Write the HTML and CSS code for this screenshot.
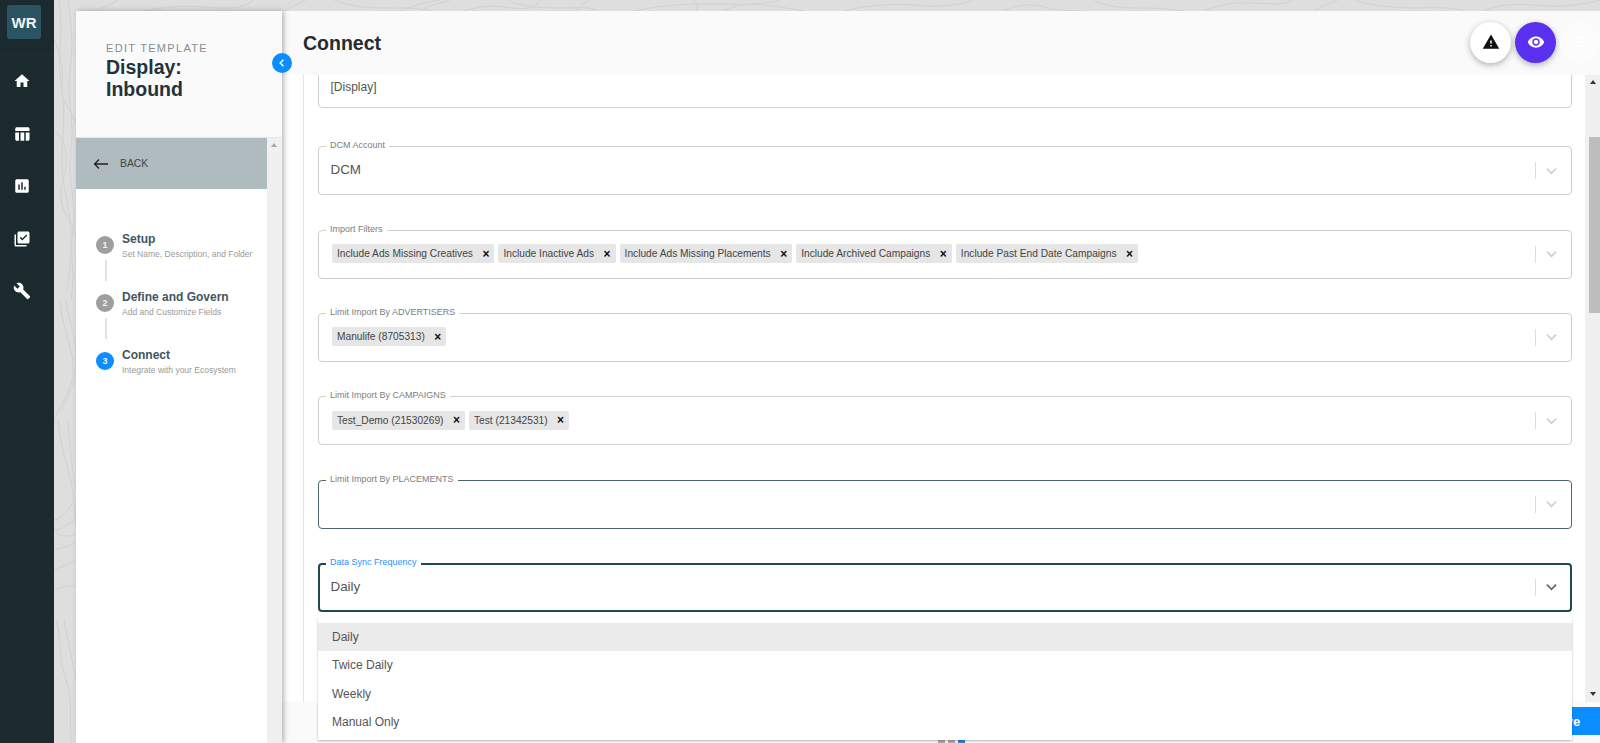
FILE: index.html
```html
<!DOCTYPE html>
<html lang="en">
<head>
<meta charset="utf-8">
<title>Edit Template</title>
<link rel="stylesheet" href="styles.css">
</head>
<body>
<div class="app">
  <nav class="rail">
    <div class="rail-top"><div class="logo">WR</div></div>
    <a class="rail-item"><svg class="icon18" viewBox="0 0 24 24"><path d="M10 20v-6h4v6h5v-8h3L12 3 2 12h3v8z"/></svg></a>
    <a class="rail-item"><svg class="icon18" viewBox="0 0 24 24"><path d="M10 10.02h5V21h-5zM17 21h3c1.1 0 2-.9 2-2v-9h-5v11zm3-18H5c-1.1 0-2 .9-2 2v3h19V5c0-1.1-.9-2-2-2zM3 19c0 1.1.9 2 2 2h3V10H3v9z"/></svg></a>
    <a class="rail-item"><svg class="icon18" viewBox="0 0 24 24"><path d="M19 3H5c-1.1 0-2 .9-2 2v14c0 1.1.9 2 2 2h14c1.1 0 2-.9 2-2V5c0-1.1-.9-2-2-2zM9 17H7v-7h2v7zm4 0h-2V7h2v10zm4 0h-2v-4h2v4z"/></svg></a>
    <a class="rail-item"><svg class="icon18" viewBox="0 0 24 24"><path d="M4 6H2v14c0 1.1.9 2 2 2h14v-2H4V6zm16-4H8c-1.1 0-2 .9-2 2v12c0 1.1.9 2 2 2h12c1.1 0 2-.9 2-2V4c0-1.1-.9-2-2-2zm-7.53 12L9 10.5l1.4-1.41 2.07 2.08L17.6 6 19 7.41 12.47 14z"/></svg></a>
    <a class="rail-item"><svg class="icon18" viewBox="0 0 24 24"><path d="M22.7 19l-9.1-9.1c.9-2.3.4-5-1.5-6.9-2-2-5-2.4-7.4-1.3L9 6 6 9 1.6 4.7C.4 7.1.9 10.1 2.9 12.1c1.9 1.9 4.6 2.4 6.9 1.5l9.1 9.1c.4.4 1 .4 1.4 0l2.3-2.3c.5-.4.5-1.1.1-1.4z"/></svg></a>
  </nav>

  <div class="stage">
    <svg class="topo" viewBox="0 0 1546 743" preserveAspectRatio="none" aria-hidden="true">
      <path d="M5 0c5 30-3 60 3 90s-5 60 3 100 8 60 2 100"/>
      <path d="M14 0c3 24 6 44 2 70s5 50 1 80 6 50 2 80 3 40-2 70"/>
      <path d="M0 40c6 14 10 26 8 44s8 22 14 40"/>
      <path d="M0 130c8 6 14 20 12 36s-8 22-4 38 12 20 14 34"/>
      <path d="M6 300c2 24 8 36 12 56s-2 34-10 48-8 14-8 20"/>
      <path d="M12 300c2 20 10 32 10 60s-8 34-14 50"/>
      <path d="M4 420c3 30 10 46 14 66s2 30 4 40"/>
      <path d="M14 420c2 26 4 50 8 70"/>
      <path d="M0 520c8-2 14-10 22-22"/>
      <path d="M0 530c8 0 16-6 22-12"/>
      <path d="M0 530c6 6 12 8 22 4"/>
      <path d="M0 550c8-2 16-4 22-8"/>
      <path d="M0 570c8-4 14-6 22-10"/>
      <path d="M0 590c10-4 14-4 22-4"/>
      <path d="M2 620c6 20 2 40 10 60s2 40 6 63"/>
      <path d="M10 620c4 24 8 36 12 62"/>
      <path d="M40 11c10-4 20-8 24-11"/>
      <path d="M90 11c20-4 36-6 60-4s40 2 50-7"/>
      <path d="M230 11c8-4 16-8 22-11"/>
      <path d="M280 0c14 6 30 8 54 8s30 0 44 3"/>
      <path d="M346 11c14-6 24-8 40-11"/>
      <path d="M366 11c10-6 20-8 30-11"/>
      <path d="M410 11c14-4 24-6 40-4s30 4 36-7"/>
      <path d="M454 0c10 6 30 8 50 8s30-2 40 3"/>
      <path d="M520 11c8-4 10-8 14-11"/>
      <path d="M580 11c20-4 40-7 70-7s60 2 76-4"/>
      <path d="M640 0c4 4 4 8 2 11"/>
      <path d="M670 11c10-6 24-8 40-6s30 4 40 6"/>
      <path d="M790 11c24-6 50-8 70-6s40 2 60-5"/>
      <path d="M950 11c10-6 26-8 40-4s30 4 40 4"/>
      <path d="M1040 0c8 4 20 8 40 8s30 0 50 3"/>
      <path d="M1150 11c14-6 30-9 50-8s30 2 40-3"/>
      <path d="M1260 11c8-5 16-8 24-11"/>
      <path d="M1300 0c20 6 40 8 60 8s30-2 50 3"/>
      <path d="M1430 11c14-6 30-8 50-6s40 2 66-5"/>
    </svg>

    <aside class="panel">
      <header class="panel-head">
        <div class="eyebrow">EDIT TEMPLATE</div>
        <h1 class="panel-title">Display:<br>Inbound</h1>
      </header>
      <div class="panel-body">
        <div class="panel-main">
          <div class="back">
            <svg class="back-arrow" viewBox="0 0 16 12"><path d="M15 6H2M6 1.5 1.5 6 6 10.5"/></svg>
            <span>BACK</span>
          </div>
          <ol class="steps">
            <li class="step">
              <div class="step-track"><span class="step-num">1</span><span class="step-line"></span></div>
              <div class="step-text"><div class="step-title">Setup</div><div class="step-sub">Set Name, Description, and Folder</div></div>
            </li>
            <li class="step">
              <div class="step-track"><span class="step-num">2</span><span class="step-line"></span></div>
              <div class="step-text"><div class="step-title">Define and Govern</div><div class="step-sub">Add and Customize Fields</div></div>
            </li>
            <li class="step">
              <div class="step-track"><span class="step-num is-active">3</span></div>
              <div class="step-text"><div class="step-title">Connect</div><div class="step-sub">Integrate with your Ecosystem</div></div>
            </li>
          </ol>
        </div>
        <div class="scrollbar"><span class="arrow-up"></span></div>
      </div>
      <button class="collapse" aria-label="Collapse"><svg viewBox="0 0 10 10"><path d="M6.4 1.8 3.2 5l3.2 3.2"/></svg></button>
    </aside>

    <main class="main">
      <header class="main-head">
        <h2 class="main-title">Connect</h2>
        <div class="fabs">
          <button class="fab fab-white" aria-label="Warnings"><svg class="icon18" viewBox="0 0 24 24"><path d="M1 21h22L12 2 1 21zm12-3h-2v-2h2v2zm0-4h-2v-4h2v4z"/></svg></button>
          <button class="fab fab-purple" aria-label="Preview"><svg class="icon18" viewBox="0 0 24 24"><path d="M12 4.5C7 4.5 2.73 7.61 1 12c1.73 4.39 6 7.5 11 7.5s9.27-3.11 11-7.5c-1.73-4.39-6-7.5-11-7.5zM12 17c-2.76 0-5-2.24-5-5s2.24-5 5-5 5 2.24 5 5-2.24 5-5 5zm0-8c-1.66 0-3 1.34-3 3s1.34 3 3 3 3-1.34 3-3-1.34-3-3-3z"/></svg></button>
          <button class="fab fab-ghost" aria-label="Menu"><svg viewBox="0 0 14 10"><path d="M1 1h12M1 5h9M1 9h5"/></svg></button>
        </div>
      </header>

      <div class="main-body">
        <div class="form-scroll">
          <div class="form">
            <div class="field field-first"><div class="value value-small">[Display]</div></div>

            <div class="field">
              <label class="field-label">DCM Account</label>
              <div class="value">DCM</div>
              <div class="field-end"><i class="sep"></i><svg class="chev" viewBox="0 0 12 8"><path d="M1 1.5 6 6.5l5-5"/></svg></div>
            </div>

            <div class="field">
              <label class="field-label">Import Filters</label>
              <div class="chips">
                <span class="chip">Include Ads Missing Creatives<b>×</b></span>
                <span class="chip">Include Inactive Ads<b>×</b></span>
                <span class="chip">Include Ads Missing Placements<b>×</b></span>
                <span class="chip">Include Archived Campaigns<b>×</b></span>
                <span class="chip">Include Past End Date Campaigns<b>×</b></span>
              </div>
              <div class="field-end"><i class="sep"></i><svg class="chev" viewBox="0 0 12 8"><path d="M1 1.5 6 6.5l5-5"/></svg></div>
            </div>

            <div class="field">
              <label class="field-label">Limit Import By ADVERTISERS</label>
              <div class="chips"><span class="chip">Manulife (8705313)<b>×</b></span></div>
              <div class="field-end"><i class="sep"></i><svg class="chev" viewBox="0 0 12 8"><path d="M1 1.5 6 6.5l5-5"/></svg></div>
            </div>

            <div class="field">
              <label class="field-label">Limit Import By CAMPAIGNS</label>
              <div class="chips">
                <span class="chip">Test_Demo (21530269)<b>×</b></span>
                <span class="chip">Test (21342531)<b>×</b></span>
              </div>
              <div class="field-end"><i class="sep"></i><svg class="chev" viewBox="0 0 12 8"><path d="M1 1.5 6 6.5l5-5"/></svg></div>
            </div>

            <div class="field field-hover">
              <label class="field-label">Limit Import By PLACEMENTS</label>
              <div class="field-end"><i class="sep"></i><svg class="chev" viewBox="0 0 12 8"><path d="M1 1.5 6 6.5l5-5"/></svg></div>
            </div>

            <div class="field field-focus">
              <label class="field-label">Data Sync Frequency</label>
              <div class="value">Daily</div>
              <div class="field-end"><i class="sep"></i><svg class="chev" viewBox="0 0 12 8"><path d="M1 1.5 6 6.5l5-5"/></svg></div>
            </div>

            <div class="field field-next"></div>
          </div>
        </div>
        <div class="scrollbar scrollbar-main">
          <span class="arrow-up"></span>
          <span class="thumb"></span>
          <span class="arrow-down"></span>
        </div>
      </div>

      <footer class="main-foot">
        <div class="dots"><i></i><i></i><i class="is-on"></i></div>
        <button class="save">Save</button>
      </footer>

      <ul class="menu">
        <li class="is-selected">Daily</li>
        <li>Twice Daily</li>
        <li>Weekly</li>
        <li>Manual Only</li>
      </ul>
    </main>
  </div>
</div>
</body>
</html>
```

FILE: styles.css
```css
* { box-sizing: border-box; }
html, body { height: 100%; }
body {
  margin: 0;
  overflow: hidden;
  font-family: "Liberation Sans", Arial, sans-serif;
  color: #333;
  background: #dedede;
}
.app { display: flex; height: 743px; overflow: hidden; }

.icon18 { width: 18px; height: 18px; display: block; fill: currentColor; }

/* rail */
.rail { width: 54px; flex: none; background: #1a2a2e; color: #fff; display: flex; flex-direction: column; }
.rail-top { height: 55px; padding: 5px 7px 0; border-bottom: 1px solid #1e3035; }
.logo {
  width: 34px; height: 34px; border-radius: 3px; background: #2a5461;
  display: flex; align-items: center; justify-content: center;
  font-size: 15px; font-weight: 700; color: #eef4f4;
}
.rail-item { height: 52.5px; padding-right: 10px; display: flex; align-items: center; justify-content: center; }

/* stage */
.stage { position: relative; flex: 1; min-width: 0; display: flex; padding: 11px 0 0 22px; background: #dedede; }
.topo { position: absolute; inset: 0; width: 100%; height: 100%; }
.topo path { fill: none; stroke: #d2d2d2; stroke-width: 1; }

/* left panel */
.panel {
  position: relative; z-index: 2; width: 206px; flex: none; display: flex; flex-direction: column;
  background: #fff; box-shadow: 2px 0 5px rgba(0,0,0,.28);
}
.panel-head { height: 127px; background: #fafafa; padding: 32px 0 0 30px; border-bottom: 1px solid #e6e6e6; }
.eyebrow { font-size: 11px; line-height: 11px; letter-spacing: 1.3px; color: #8c8c8c; }
.panel-title { margin: 2px 0 0; font-size: 19.5px; line-height: 22px; font-weight: 700; color: #24323a; }
.panel-body { flex: 1; display: flex; min-height: 0; }
.panel-main { flex: 1; min-width: 0; }
.back { height: 51px; background: #b0bbbf; display: flex; align-items: center; padding-left: 17px; font-size: 10.4px; color: #444; }
.back-arrow { width: 16px; height: 12px; margin-right: 11px; fill: none; stroke: #222; stroke-width: 1.3; }
.steps { list-style: none; margin: 0; padding: 47px 0 0 20px; }
.step { display: flex; height: 58px; }
.step-track { width: 18px; flex: none; display: flex; flex-direction: column; align-items: center; }
.step-num {
  width: 18px; height: 18px; border-radius: 50%; background: #9e9e9e; color: #f2f2f2;
  display: flex; align-items: center; justify-content: center; font-size: 9px; font-weight: 700;
}
.step-num.is-active { background: #0a8dff; }
.step-line { width: 2px; height: 21px; margin: 6px 0 0 2px; background: #e2e2e2; }
.step-text { margin: -4px 0 0 8px; }
.step-title { font-size: 12px; line-height: 15px; font-weight: 700; color: #42555f; }
.step-sub { margin-top: 2px; font-size: 8.5px; line-height: 11px; color: #9a9a9a; white-space: nowrap; }

.scrollbar { position: relative; width: 15px; flex: none; background: #f0f0f0; }
.arrow-up, .arrow-down { position: absolute; left: 4px; width: 0; height: 0; border-left: 3.5px solid transparent; border-right: 3.5px solid transparent; }
.arrow-up { top: 5px; border-bottom: 4px solid #a8a8a8; }
.collapse {
  position: absolute; right: -10px; top: 42px; width: 20px; height: 20px; padding: 0; border: 0; border-radius: 50%;
  background: #0a8dff; display: flex; align-items: center; justify-content: center;
}
.collapse svg { width: 10px; height: 10px; fill: none; stroke: #fff; stroke-width: 1.5; }

/* main */
.main { position: relative; flex: 1; min-width: 0; display: flex; flex-direction: column; background: #fff; }
.main-head {
  position: relative; z-index: 1; height: 64px; flex: none; background: #fafafa;
  display: flex; align-items: center; justify-content: space-between; padding-left: 21px;
}
.main-title { margin: 0; font-size: 19.5px; font-weight: 700; color: #262c30; }
.fabs { display: flex; align-items: center; gap: 4px; margin-top: -2px; }
.fab { width: 41px; height: 41px; border: 0; padding: 0; border-radius: 50%; display: flex; align-items: center; justify-content: center; }
.fab-white { background: #fff; color: #111; box-shadow: 0 2px 6px rgba(0,0,0,.3); }
.fab-purple { background: #5b2ff0; color: #fff; box-shadow: 0 2px 6px rgba(0,0,0,.3); }
.fab-ghost { width: 40px; background: #fcfcfc; margin-right: 0; }
.fab-ghost svg { width: 14px; height: 10px; fill: none; stroke: #fff; stroke-width: 1.4; }

.main-body { flex: 1; min-height: 0; display: flex; }
.form-scroll { flex: 1; min-width: 0; overflow: hidden; margin-left: 21px; border-left: 1px solid #e4e4e4; }
.form { display: flex; flex-direction: column; gap: 34.35px; margin-top: -16px; padding: 0 13px 0 14px; }
.field {
  position: relative; height: 49px; flex: none; border: 1px solid #cfcfcf; border-radius: 4px; background: #fff;
  display: flex; align-items: center; padding: 0 40px 0 11.5px;
}
.field-first { margin-bottom: 3.85px; }
.field-label {
  position: absolute; left: 7px; top: -7px; padding: 0 4px; background: #fff;
  font-size: 9px; line-height: 11px; color: #7d7d7d; white-space: nowrap;
}
.value { font-size: 13.4px; color: #555; margin-top: -2px; }
.value-small { font-size: 12px; margin-top: 6px; }
.chips { display: flex; gap: 4px; margin: -1px 0 0 1.5px; }
.chip {
  height: 19px; background: #e6e6e6; border-radius: 2px; padding: 0 5px; display: flex; align-items: center;
  font-size: 10.2px; color: #444; white-space: nowrap;
}
.chip b { margin-left: 9.5px; font-size: 12px; line-height: 12px; color: #111; }
.field-end { position: absolute; right: 0; top: 0; bottom: 0; width: 36px; display: flex; align-items: center; }
.sep { width: 1px; height: 17px; background: #ddd; }
.chev { width: 11px; height: 8px; margin-left: 10px; fill: none; stroke: #cfcfcf; stroke-width: 1.9; }
.field-hover { border-color: #4d686c; }
.field-focus { border: 2px solid #1e4a52; padding-left: 10.5px; }
.field-focus .field-label { left: 6px; top: -8px; color: #2e8fff; }
.field-focus .chev { stroke: #666; }
.field-focus .field-end { right: -1px; }
.field-next { margin-top: 27px; }

.scrollbar-main { position: relative; }
.scrollbar-main .arrow-up { border-bottom-color: #333; left: 5px; }
.thumb { position: absolute; left: 4px; right: 0; top: 62px; height: 176px; background: #bdbdbd; }
.arrow-down { left: 5px; bottom: 6px; border-top: 4px solid #333; }

.main-foot {
  position: relative; height: 41px; flex: none; background: #fafafa; display: flex; justify-content: flex-end; align-items: flex-start; padding-top: 5px;
}
.dots { position: absolute; left: 656px; top: 33px; display: flex; gap: 3px; }
.dots i { width: 7px; height: 8px; background: #aaa; }
.dots .is-on { background: #0a8dff; }
.save { width: 70px; height: 28px; border: 0; padding: 0; background: #0a8dff; color: #fff; font: 700 13px "Liberation Sans", Arial, sans-serif; }

.menu {
  position: absolute; z-index: 3; left: 36px; top: 607px; width: 1254px; height: 122px; margin: 0; padding: 5px 0 0; list-style: none;
  background: #fff; box-shadow: 0 1px 2px rgba(0,0,0,.28);
}
.menu li { height: 28.33px; line-height: 28px; padding-left: 14px; font-size: 12px; color: #555; }
.menu .is-selected { background: #ebebeb; }
```
